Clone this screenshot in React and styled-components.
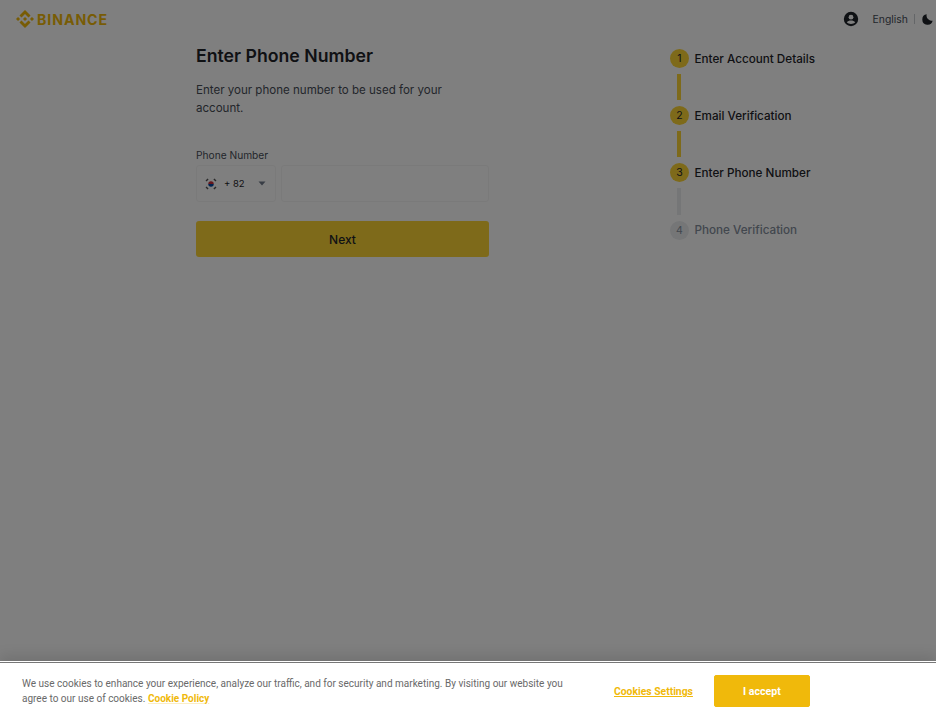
import React from 'react';
import styled, { createGlobalStyle } from 'styled-components';

const Global = createGlobalStyle`
  html, body { margin: 0; padding: 0; background: #fff; height: 100%; }
  body { font-family: Inter, "Noto Sans", "Liberation Sans", sans-serif; overflow: hidden; }
  * { box-sizing: border-box; }
`;

const Page = styled.div`
  position: relative;
  width: 936px;
  height: 713px;
  overflow: hidden;
  background: #fff;
`;
const Header = styled.header`
  display: flex;
  align-items: center;
  justify-content: space-between;
  height: 38px;
  padding: 0 3px 0 16px;
`;
const Brand = styled.div`
  display: flex;
  align-items: center;
  gap: 3px;
  color: #f0b90b;
  font-size: 14.2px;
  font-weight: 700;
  letter-spacing: 0.9px;
`;
const HeaderActions = styled.div`
  display: flex;
  align-items: center;
  color: #1e2329;
`;
const Language = styled.span`
  margin-left: 14px;
  font-size: 10.4px;
  color: #474d57;
`;
const Divider = styled.span`
  width: 1px;
  height: 10px;
  margin: 0 7px 0 6px;
  background: #c9ccd1;
`;
const Main = styled.main`
  display: flex;
  align-items: flex-start;
  padding: 6px 0 0 196px;
`;
const Form = styled.section`
  width: 293px;
`;
const Title = styled.h1`
  margin: 0;
  font-size: 17.7px;
  line-height: 23px;
  font-weight: 600;
  color: #1e2329;
`;
const Lead = styled.p`
  margin: 14px 0 0;
  font-size: 11.55px;
  line-height: 18px;
  color: #474d57;
`;
const FieldLabel = styled.label`
  display: block;
  margin-top: 31px;
  font-size: 10.2px;
  line-height: 14px;
  color: #474d57;
`;
const FieldRow = styled.div`
  display: flex;
  gap: 5px;
  margin-top: 3px;
`;
const CountrySelect = styled.div`
  display: flex;
  align-items: center;
  width: 80px;
  height: 37px;
  padding: 0 9px 0 8px;
  border: 1px solid #f5f5f5;
  border-radius: 3px;
  font-size: 9.5px;
  color: #1e2329;
`;
const Code = styled.span`
  margin-left: 7px;
  flex: 1;
  white-space: pre;
`;
const PhoneInput = styled.div`
  flex: 1;
  height: 37px;
  border: 1px solid #f5f5f5;
  border-radius: 3px;
`;
const NextButton = styled.button`
  display: block;
  width: 100%;
  height: 36px;
  margin-top: 19px;
  border: 0;
  border-radius: 3px;
  background: #fcd535;
  color: #1e2329;
  font: 500 12px Inter, "Liberation Sans", sans-serif;
`;
const Steps = styled.ol`
  list-style: none;
  margin: 5px 0 0 181px;
  padding: 0;
`;
const Step = styled.li`
  display: flex;
  align-items: center;
  gap: 5.5px;
  height: 19px;
`;
const Badge = styled.span`
  display: flex;
  align-items: center;
  justify-content: center;
  width: 19px;
  height: 19px;
  border-radius: 50%;
  background: ${p => (p.$active ? '#fcd535' : '#eaecef')};
  color: ${p => (p.$active ? '#1e2329' : '#848e9c')};
  font-size: 10.5px;
`;
const StepLabel = styled.span`
  font-size: 11.7px;
  font-weight: 500;
  color: ${p => (p.$active ? '#1e2329' : '#848e9c')};
`;
const Connector = styled.div`
  width: 4px;
  height: 26.2px;
  margin: 6px 0 6px 7px;
  background: ${p => (p.$active ? '#fcd535' : '#eaecef')};
`;
const Overlay = styled.div`
  position: absolute;
  inset: 0;
  background: rgba(0, 0, 0, 0.5);
`;
const CookieBar = styled.aside`
  position: absolute;
  left: 0;
  right: 0;
  bottom: 0;
  height: 50px;
  display: flex;
  align-items: flex-start;
  padding: 14px 0 0 22px;
  background: #fff;
  box-shadow: 0 -1px 0 #777, 0 -2px 0 #fff, 0 -8px 12px rgba(0, 0, 0, 0.1);
`;
const CookieText = styled.p`
  width: 546px;
  margin: 0;
  font-family: Roboto, "Liberation Sans", sans-serif;
  font-size: 10.03px;
  line-height: 14.5px;
  color: #696969;
`;
const CookieLink = styled.a`
  color: #f0b90b;
  font-weight: 700;
  text-decoration: underline;
  text-decoration-color: #fbeec4;
`;
const SettingsLink = styled.a`
  margin: 8px 0 0 46px;
  color: #f0b90b;
  font-family: Roboto, "Liberation Sans", sans-serif;
  font-size: 10.35px;
  font-weight: 700;
  text-decoration: underline;
`;
const AcceptButton = styled.button`
  width: 96px;
  height: 32px;
  margin: -2px 0 0 21px;
  border: 1px solid #f0b90b;
  border-radius: 2px;
  background: #f0b90b;
  color: #fff;
  font: 700 10.6px Roboto, "Liberation Sans", sans-serif;
`;

const Logo = () => (
  <svg width="18" height="18" viewBox="0 0 126.61 126.61" fill="#f0b90b" aria-hidden="true">
    <path d="M38.73 53.2 63.31 28.62 87.9 53.21 102.2 38.91 63.31 0 24.42 38.9z" />
    <path d="M0 63.31 14.3 49.01 28.6 63.31 14.3 77.61z" />
    <path d="M38.73 73.41 63.31 97.99 87.9 73.4 102.21 87.69 63.31 126.61 24.42 87.72z" />
    <path d="M98.01 63.31 112.31 49.01 126.61 63.31 112.31 77.61z" />
    <path d="M77.82 63.3 63.31 48.79 48.81 63.29 63.31 77.82z" />
  </svg>
);

const UserIcon = () => (
  <svg width="16" height="16" viewBox="0 0 16 16" aria-hidden="true">
    <circle cx="8" cy="8" r="7.2" fill="#1e2329" />
    <circle cx="8" cy="6.2" r="2.4" fill="#fff" />
    <path d="M3.8 11.3C4.8 9.9 6.2 9.4 8 9.4s3.2.5 4.2 1.9C11.2 12.5 9.7 13 8 13s-3.2-.5-4.2-1.7Z" fill="#fff" />
  </svg>
);

const MoonIcon = () => (
  <svg width="11" height="11" viewBox="0 0 12 12" aria-hidden="true">
    <path d="M5.2.4a5.7 5.7 0 1 0 6.4 6.9A5 5 0 0 1 7.2 6 5 5 0 0 1 5.2.4Z" fill="#1e2329" />
  </svg>
);

const KoreaFlag = () => (
  <svg width="12" height="12" viewBox="0 0 14 14" aria-hidden="true">
    <g stroke="#555" strokeWidth="1.7">
      <path d="M1.2 3.6 3.6 1.2M12.8 10.4 10.4 12.8M1.2 10.4 3.6 12.8M12.8 3.6 10.4 1.2" />
    </g>
    <path d="M3.8 7a3.2 3.2 0 0 1 6.4 0Z" fill="#cd2e3a" />
    <path d="M3.8 7a3.2 3.2 0 0 0 6.4 0Z" fill="#0047a0" />
  </svg>
);

const Caret = () => (
  <svg width="8" height="5" viewBox="0 0 8 5" aria-hidden="true">
    <path d="M0.5 0.5h7L4 4.5Z" fill="#707a8a" />
  </svg>
);

const stepData = [
  ['Enter Account Details', true, true],
  ['Email Verification', true, true],
  ['Enter Phone Number', true, false],
  ['Phone Verification', false, false],
];

export default function App() {
  return (
    <Page>
      <Global />
      <Header>
        <Brand><Logo />BINANCE</Brand>
        <HeaderActions>
          <UserIcon />
          <Language>English</Language>
          <Divider />
          <MoonIcon />
        </HeaderActions>
      </Header>
      <Main>
        <Form>
          <Title>Enter Phone Number</Title>
          <Lead>Enter your phone number to be used for your<br />account.</Lead>
          <FieldLabel>Phone Number</FieldLabel>
          <FieldRow>
            <CountrySelect>
              <KoreaFlag />
              <Code>+ 82</Code>
              <Caret />
            </CountrySelect>
            <PhoneInput />
          </FieldRow>
          <NextButton>Next</NextButton>
        </Form>
        <Steps>
          {stepData.map(([label, active, lineActive], i) => (
            <React.Fragment key={label}>
              <Step>
                <Badge $active={active}>{i + 1}</Badge>
                <StepLabel $active={active}>{label}</StepLabel>
              </Step>
              {i < 3 && <Connector $active={lineActive} />}
            </React.Fragment>
          ))}
        </Steps>
      </Main>
      <Overlay />
      <CookieBar>
        <CookieText>
          We use cookies to enhance your experience, analyze our traffic, and for security and marketing. By visiting our website you agree to our use of cookies. <CookieLink>Cookie Policy</CookieLink>
        </CookieText>
        <SettingsLink>Cookies Settings</SettingsLink>
        <AcceptButton>I accept</AcceptButton>
      </CookieBar>
    </Page>
  );
}
